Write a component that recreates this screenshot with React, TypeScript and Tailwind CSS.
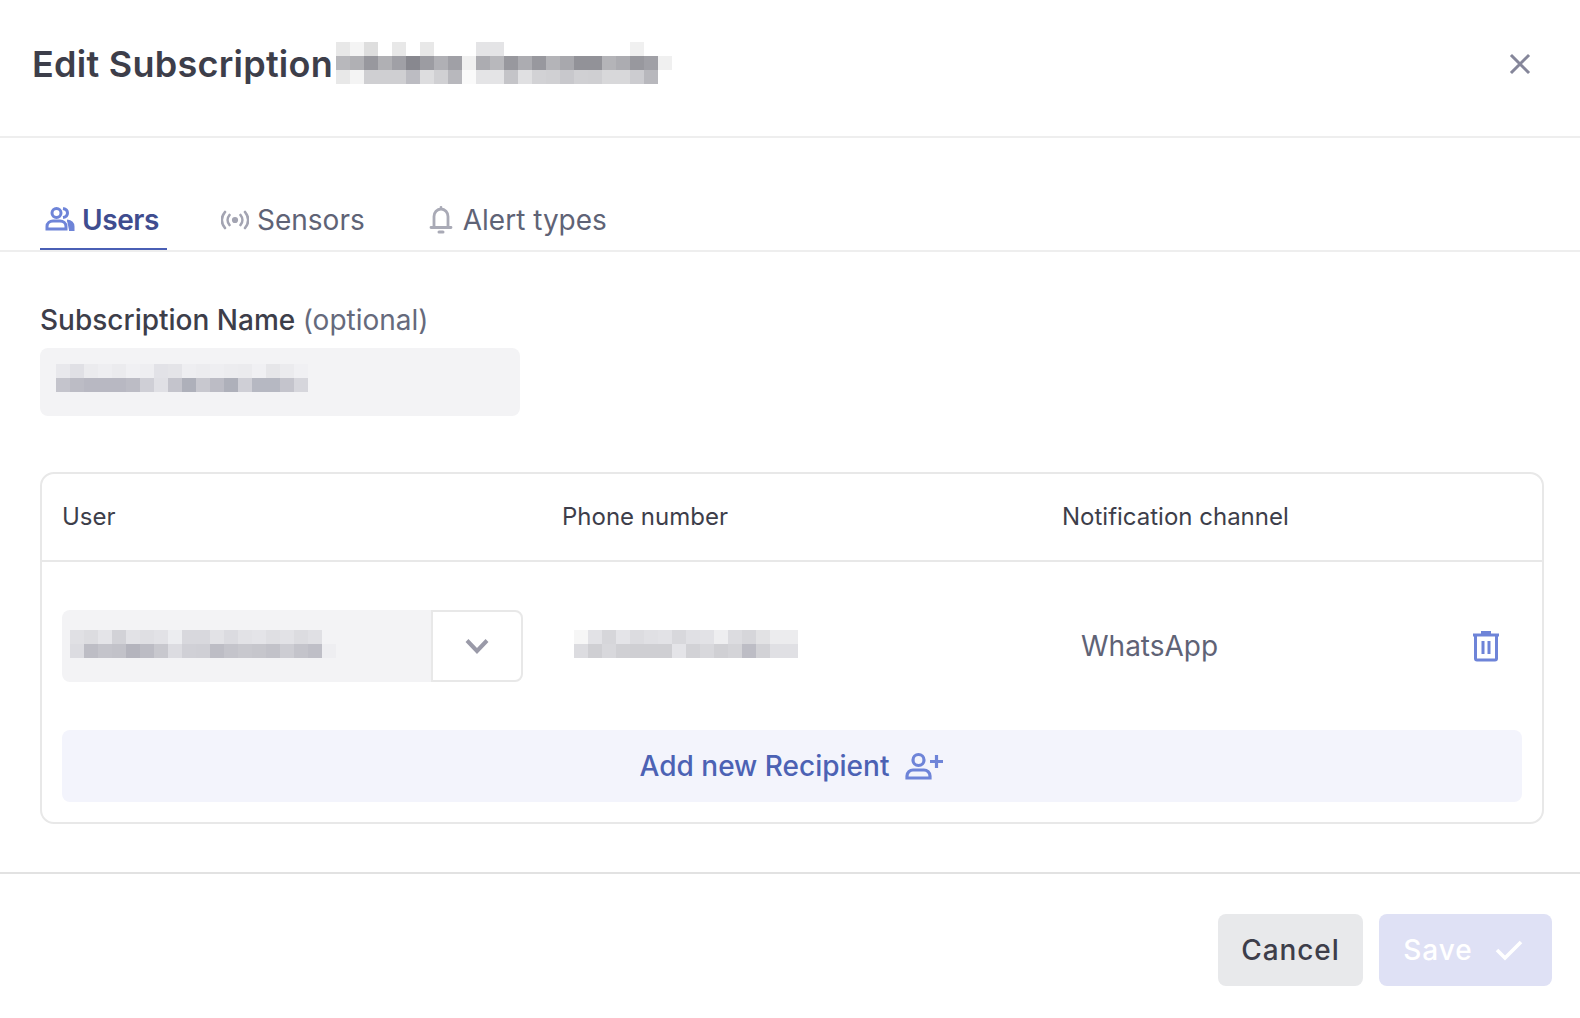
import React from "react";

function Pixels({ rows, className }: { rows: string[][]; className?: string }) {
  const cols = Math.max(...rows.map((r) => r.length));
  return (
    <svg width={cols * 14} height={rows.length * 14} className={className} shapeRendering="crispEdges">
      {rows.map((r, y) => r.map((c, x) => <rect key={x + "-" + y} x={x * 14} y={y * 14} width={14} height={14} fill={c} />))}
    </svg>
  );
}

const titleRows = [
  ["#e8e8e8","#f4f4f4","#dedede","#ffffff","#e8e8e8","#ffffff","#e8e8e8","#ffffff","#ffffff","#ffffff","#e4e4e6","#e4e4e6","#ffffff","#ffffff","#ffffff","#ffffff","#ffffff","#ffffff","#ffffff","#ffffff","#ffffff","#f0f0f0","#ffffff","#ffffff"],
  ["#b8b8bc","#b0b0b4","#98989e","#b0b0b4","#a0a0a6","#88888f","#9c9ca2","#b0b0b5","#a0a0a6","#f0f0f0","#acacb1","#b8b8bc","#98989e","#acacb1","#98989e","#b4b4b8","#a8a8ad","#929298","#929298","#b4b4b8","#acacb1","#98989e","#a0a0a6","#f0f0f0"],
  ["#e8e8e8","#f4f4f4","#cfcfd2","#cfcfd2","#cfcfd2","#bcbcc2","#dddddf","#d0d0d3","#b8b8bd","#fafafa","#e4e4e6","#e4e4e6","#c4c4c8","#e0e0e2","#d2d2d5","#d0d0d3","#c8c8cc","#d0d0d3","#cfcfd2","#d8d8da","#d8d8da","#ccccd0","#b8b8bd","#ffffff"],
];
const nameRows = [
  ["#e8e8ec","#e0e0e5","#ebebee","#eeeef1","#ebebee","#f0f0f3","#eeeef1","#e2e2e7","#e4e4e8","#eeeef1","#ececef","#eeeef1","#ececef","#ebebee","#f0f0f3","#e6e6e9","#ebebee","#f0f0f3"],
  ["#c4c4cc","#bcbcc5","#b8b8c2","#b8b8c2","#b8b8c2","#bcbcc5","#cfcfd6","#e0e0e5","#c4c4cc","#aeb0ba","#c8c8cf","#bcbcc5","#aeb0ba","#cfcfd6","#b6b8c2","#b6b8c2","#c4c4cc","#d6d6dc"],
];
const userRows = [
  ["#e0e0e4","#dcdce0","#e4e4e8","#d2d2d7","#e2e2e6","#dfdfe3","#e2e2e6","#ecedf0","#d8d8dd","#d8d8dd","#e2e2e6","#dbdbe0","#e2e2e6","#e4e4e8","#dfdfe3","#e2e2e6","#dcdce0","#e0e0e4","#f3f3f5"],
  ["#dcdce1","#bdbdc5","#c4c4cb","#c2c2c9","#b4b4bd","#bcbcc4","#c8c8ce","#dcdce1","#d0d0d6","#cfcfd5","#bdbdc5","#c4c4cb","#c8c8ce","#c6c6cc","#c2c2c9","#cdcdd3","#c4c4cb","#bfbfc7","#eeeef1"],
];
const phoneRows = [
  ["#f6f6f6","#e2e2e6","#d6d6da","#e4e4e8","#dcdce0","#e0e0e4","#e2e2e6","#d8d8dc","#e0e0e4","#e2e2e6","#eeeef0","#dcdce0","#d6d6da","#e2e2e4","#ececee","#ececee"],
  ["#dcdce0","#cfcfd3","#d8d8dc","#d0d0d4","#cfcfd3","#cfcfd3","#cfcfd3","#e4e4e8","#d2d2d6","#d8d8dc","#d0d0d4","#d4d4d8","#bdbdc5","#d2d2d6","#e0e0e4","#e0e0e4"],
];

export default function App() {
  return (
    <div className="w-[1580px] h-[1018px] bg-white overflow-hidden flex flex-col font-['Inter',sans-serif] text-[#3d3e4a]">
      <header className="h-[138px] border-b-2 border-[#eeeeee] flex items-center justify-between pl-8 pr-[48px] pb-[10px]">
        <div className="flex items-center">
          <h1 className="mt-[2px] text-[36px] font-semibold leading-[40px] tracking-[0.25px] whitespace-nowrap">Edit Subscription</h1>
          <Pixels rows={titleRows} className="ml-[3px]" />
        </div>
        <svg width="22" height="22" viewBox="0 0 22 22" fill="none" stroke="#85869a" strokeWidth="3" strokeLinecap="square" className="mr-[1px] mt-[1px]">
          <path d="M3 3 19 19M19 3 3 19" />
        </svg>
      </header>

      <nav className="h-[114px] border-b-2 border-[#eeeeee] flex items-end pl-10 text-[28px] leading-[34px]">
        <div className="h-[52px] w-[127px] pt-[5px] border-b-2 border-[#4a5fb5] flex items-start pl-[5px] gap-[7px] font-semibold tracking-[-0.4px] text-[#3f4d8f]">
          <svg width="30" height="26" viewBox="0 0 30 26" fill="none" stroke="#6e84d8" strokeWidth="3" className="mt-[3px] shrink-0">
            <circle cx="11.5" cy="7" r="4.5" />
            <path d="M2 23v-2.5C2 17 5 15 8 15h7c3 0 6 2 6 5.500V23z" />
            <path d="M18 2.500c3 .5 4.500 2.500 4.500 4.500S21 11 18 11.500" />
            <path d="M22 14.500c4 .5 6.500 2.500 6.500 6V24H24" fill="#6e84d8" strokeWidth="2" />
          </svg>
          <span>Users</span>
        </div>
        <div className="h-[52px] pt-[5px] flex items-start ml-[54px] gap-[8px] text-[#5f6376]">
          <svg width="28" height="20" viewBox="0 0 28 20" fill="none" stroke="#a3a4b2" strokeWidth="2.6" strokeLinecap="round" className="mt-[7px] shrink-0">
            <circle cx="14" cy="10" r="1.800" fill="#a3a4b2" />
            <path d="M8.500 5c-2.500 3-2.500 7 0 10M19.500 5c2.500 3 2.500 7 0 10M4 2c-4 5-4 11 0 16M24 2c4 5 4 11 0 16" />
          </svg>
          <span>Sensors</span>
        </div>
        <div className="h-[52px] pt-[5px] flex items-start ml-[64px] gap-[10px] text-[#5f6376]">
          <svg width="24" height="30" viewBox="0 0 24 30" fill="none" stroke="#a9aab6" strokeWidth="2.800" strokeLinecap="round" strokeLinejoin="round" className="mt-[2px] shrink-0">
            <path d="M5 22V11.500c0-4 3-7.500 7-7.500s7 3.500 7 7.500V22M2 22.500h20M12 4V2.500" />
            <path d="M10 27h4" strokeWidth="3" />
          </svg>
          <span>Alert types</span>
        </div>
      </nav>

      <main className="px-10 flex-1 flex flex-col">
        <label className="mt-[50px] text-[28px] leading-[36px] font-medium">
          Subscription Name <span className="font-normal text-[#666a7c]">(optional)</span>
        </label>
        <div className="mt-[10px] w-[480px] h-[68px] rounded-lg bg-[#f3f3f5] flex items-center pl-4">
          <Pixels rows={nameRows} className="mb-[8px]" />
        </div>

        <section className="mt-[56px] w-[1504px] h-[352px] border-2 border-[#e8e8e8] rounded-[14px] flex flex-col">
          <div className="h-[88px] border-b-2 border-[#e8e8e8] grid grid-cols-3 items-center text-[24px]">
            <div className="pl-5">User</div>
            <div className="pl-5">Phone number</div>
            <div className="pl-5">Notification channel</div>
          </div>
          <div className="grid grid-cols-3 mt-[48px]">
            <div className="pl-5">
              <div className="w-[461px] h-[72px] flex">
                <div className="w-[369px] bg-[#f3f3f5] rounded-l-lg flex items-center pl-2">
                  <Pixels rows={userRows} className="mb-[4px]" />
                </div>
                <div className="w-[92px] bg-white border-2 border-[#e8e8e8] rounded-r-lg flex items-center justify-center">
                  <svg width="24" height="16" viewBox="0 0 24 16" fill="none" stroke="#9a9aa8" strokeWidth="4">
                    <path d="M2 2.500 12 13 22 2.500" />
                  </svg>
                </div>
              </div>
            </div>
            <div className="pl-8 flex items-center">
              <Pixels rows={phoneRows} className="mb-[5px]" />
            </div>
            <div className="pl-[39px] pr-[43px] flex items-center justify-between text-[28px] text-[#5f6376]">
              <span>WhatsApp</span>
              <svg width="28" height="32" viewBox="0 0 28 32" fill="none" stroke="#6e84d8" strokeWidth="3" className="mr-[-1px]">
                <path d="M1 5h26" strokeWidth="3" />
                <path d="M9 2.500h10" strokeWidth="3" />
                <path d="M3.500 6v22.500a1.500 1.500 0 0 0 1.500 1.500h18a1.500 1.500 0 0 0 1.500-1.500V6" />
                <path d="M11 11v13M17 11v13" />
              </svg>
            </div>
          </div>
          <div className="mx-5 mt-[48px] h-[72px] rounded-lg bg-[#f3f4fc] flex items-center justify-center gap-[16px] text-[28px] text-[#4c62b4] font-medium">
            <span>Add new Recipient</span>
            <svg width="39" height="28" viewBox="0 0 39 28" fill="none" stroke="#6e84d8" strokeWidth="3.200" className="mb-[1px]">
              <circle cx="13.500" cy="8" r="5.500" />
              <path d="M2 26v-2c0-3.500 3-6 6-6h11c3 0 6 2.500 6 6v2z" />
              <path d="M25 9.500h13M31.500 3v13" />
            </svg>
          </div>
        </section>

        <div className="-mx-10 mt-[48px] border-t-2 border-[#e2e2e2] flex justify-end gap-4 pt-[40px] pr-7">
          <button className="w-[145px] h-[72px] rounded-lg bg-[#e8e9eb] text-[28px] font-medium tracking-[0.9px] text-[#3d3e4a]">Cancel</button>
          <button className="w-[173px] h-[72px] rounded-lg bg-[#dfe1f5] text-[28px] font-medium tracking-[1px] text-white flex items-center justify-center gap-[22px] pr-[5px]">
            <span>Save</span>
            <svg width="28" height="22" viewBox="0 0 28 22" fill="none" stroke="#ffffff" strokeWidth="3.600">
              <path d="M2 11 10 19 26 3" />
            </svg>
          </button>
        </div>
      </main>
    </div>
  );
}
